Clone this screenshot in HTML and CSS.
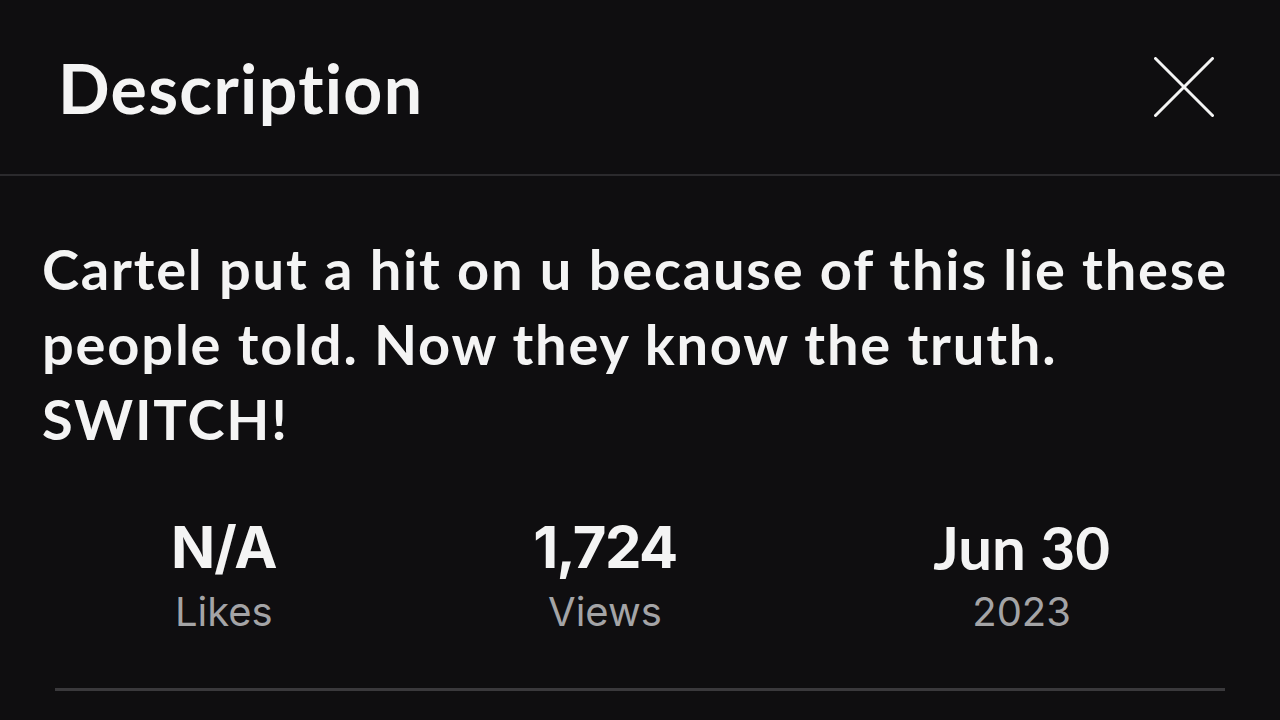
FILE: index.html
```html
<!DOCTYPE html>
<html>
<head>
<meta charset="utf-8">
<link rel="stylesheet" href="styles.css">
</head>
<body>
<div class="sheet">
  <header class="head">
    <h1 class="title">Description</h1>
    <button class="close" aria-label="Close">
      <svg width="60" height="60" viewBox="0 0 60 60"><path d="M1.5 1.5 L58.5 58.5 M58.5 1.5 L1.5 58.5" stroke="#f4f4f4" stroke-width="3" stroke-linecap="round" fill="none"/></svg>
    </button>
  </header>
  <div class="body">
    <p class="desc">Cartel put a hit on u because of this lie these people told. Now they know the truth. SWITCH!</p>
    <div class="stats">
      <div class="stat"><div class="num">N/A</div><div class="lbl">Likes</div></div>
      <div class="stat"><div class="num tight">1,724</div><div class="lbl">Views</div></div>
      <div class="stat"><div class="num date">Jun 30</div><div class="lbl">2023</div></div>
    </div>
    <div class="rule"></div>
  </div>
</div>
</body>
</html>
```
FILE: styles.css
```css
html, body { margin: 0; padding: 0; background: #0f0e10; }
body { width: 1280px; height: 720px; overflow: hidden; font-family: Lato, "Noto Sans", sans-serif; color: #f4f4f4; }
.sheet { display: flex; flex-direction: column; }
.head { height: 176px; display: flex; align-items: center; justify-content: space-between; padding: 0 66px 0 58px; border-bottom: 2px solid #2b2a2d; box-sizing: border-box; }
.title { margin: 0; font-size: 68px; font-weight: 700; line-height: 1; padding-top: 2px; letter-spacing: 1.3px; }
.close { background: none; border: 0; padding: 0; width: 60px; height: 60px; display: flex; }
.body { padding: 0 40px 0 42px; }
.desc { margin: 0; padding-top: 55px; font-size: 56px; font-weight: 700; line-height: 75px; letter-spacing: 1.8px; }
.stats { display: flex; justify-content: space-between; padding: 62px 130px 0 129px; font-family: Inter, sans-serif; }
.stat { display: flex; flex-direction: column; align-items: center; }
.num { font-size: 58px; font-weight: 700; line-height: 1; letter-spacing: -1px; }
.num.tight { letter-spacing: -1.6px; }
.num.date { font-family: Lato, sans-serif; font-size: 60px; letter-spacing: 0; line-height: 58px; }
.lbl { font-size: 40px; font-weight: 400; color: #a4a4a6; line-height: 1; margin-top: 16px; }
.rule { height: 3px; background: #3a393c; margin: 56px 15px 0 13px; }
```
